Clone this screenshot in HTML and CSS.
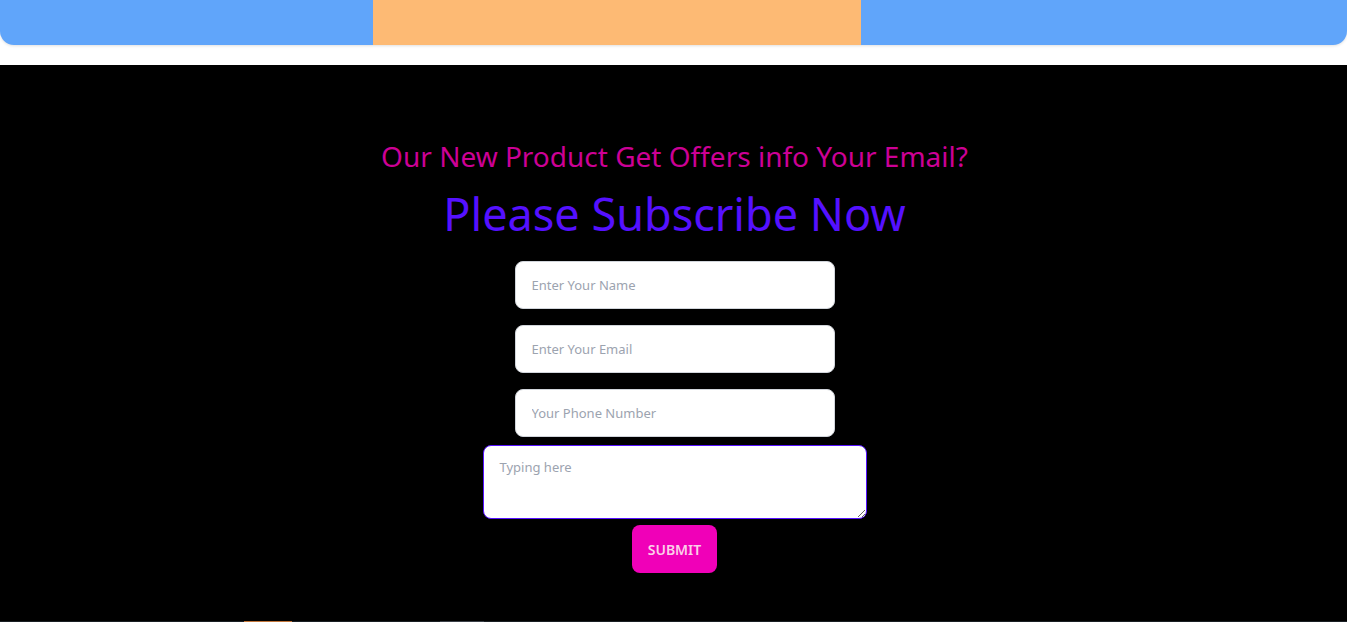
FILE: index.html
```html
<!DOCTYPE html>
<html lang="en">

<head>
    <meta charset="UTF-8">
    <title>Subscribe</title>
    <link rel="stylesheet" href="styles.css">
</head>

<body>
    <!-- Top bar -->
    <div class="top-bar">
        <div class="top-bar-middle"></div>
    </div>

    <!-- Subscribe section -->
    <section class="subscribe">
        <h3 class="subscribe-sub">Our New Product Get Offers info Your Email?</h3>
        <h1 class="subscribe-title">Please Subscribe Now</h1>
        <form class="subscribe-form">
            <input type="text" placeholder="Enter Your Name">
            <input type="email" placeholder="Enter Your Email">
            <input type="text" placeholder="Your Phone Number">
            <textarea placeholder="Typing here"></textarea>
            <button type="submit">SUBMIT</button>
        </form>
    </section>

    <!-- Footer -->
    <footer class="footer">
        <span class="footer-mark orange"></span>
        <span class="footer-mark gray"></span>
    </footer>
</body>

</html>
```

FILE: styles.css
```css
body {
    margin: 0;
    font-family: 'Noto Sans', 'Open Sans', sans-serif;
    background-color: #fff;
}

.top-bar {
    height: 45px;
    padding-left: 373px;
    background-color: #60a5fa;
    border-radius: 0 0 14px 14px;
    box-shadow: 0 1px 3px rgba(0, 0, 0, 0.12);
    display: flex;
    margin-bottom: 20px;
}

.top-bar-middle {
    width: 488px;
    background-color: #fdba74;
}

.subscribe {
    background-color: #000;
    padding: 72px 0 48px 2px;
    text-align: center;
}

.subscribe-sub {
    margin: 0;
    font-size: 28px;
    font-weight: 400;
    line-height: 38px;
    color: #cc0095;
}

.subscribe-title {
    margin: 9px 0 17px;
    font-size: 45px;
    font-weight: 400;
    line-height: 60px;
    color: #5511ff;
}

.subscribe-form {
    display: flex;
    flex-direction: column;
    align-items: center;
}

.subscribe-form input {
    box-sizing: border-box;
    width: 320px;
    height: 48px;
    margin-bottom: 16px;
    padding: 0 16px;
    border: 1px solid #d1d5db;
    border-radius: 8px;
    background: #fff;
    font-family: inherit;
    font-size: 13px;
}

.subscribe-form input:last-of-type {
    margin-bottom: 8px;
}

.subscribe-form textarea {
    box-sizing: border-box;
    width: 384px;
    height: 74px;
    padding: 12px 16px;
    border: 1px solid #5511ff;
    border-radius: 8px;
    font-family: inherit;
    font-size: 13px;
}

.subscribe-form input::placeholder,
.subscribe-form textarea::placeholder {
    color: #9ca3af;
}

.subscribe-form button {
    margin-top: 6px;
    width: 85px;
    height: 48px;
    border: none;
    border-radius: 8px;
    background-color: #f000b8;
    color: #fbcfe8;
    font-family: inherit;
    font-size: 14px;
    font-weight: 600;
    cursor: pointer;
}

.footer {
    height: 40px;
    background-color: #1a1f24;
    display: flex;
    gap: 148px;
    padding-left: 244px;
}

.footer-mark {
    height: 1px;
    width: 48px;
}

.footer-mark.orange {
    background-color: #c2763a;
}

.footer-mark.gray {
    width: 44px;
    background-color: #3a4048;
}
```
